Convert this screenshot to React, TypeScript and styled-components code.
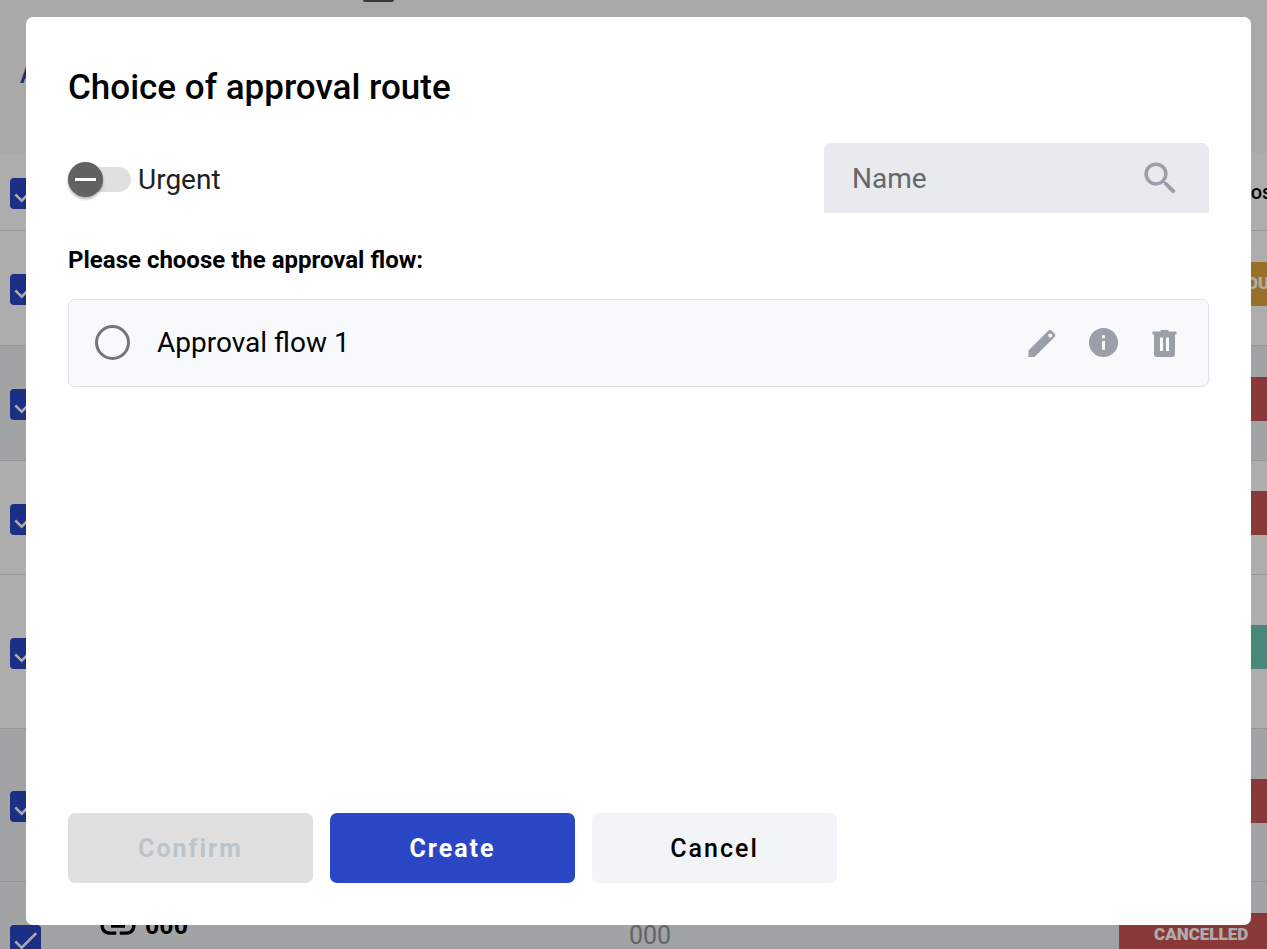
import React, { useState } from 'react';
import styled, { createGlobalStyle, css } from 'styled-components';
import { MdCheck, MdInfo, MdLink, MdSearch } from 'react-icons/md';

const color = {
  primary: '#2b46c5',
  icon: '#9aa0aa',
  green: '#6cc9b6',
  red: '#cb5551',
  amber: '#e0a53a',
};

const GlobalStyle = createGlobalStyle`
  *, *::before, *::after { box-sizing: border-box; }
  body {
    margin: 0;
    font-family: Roboto, "Liberation Sans", sans-serif;
    color: #000;
    background: #fff;
  }
  button, input { font: inherit; }
`;

/* ---------- page under the dialog ---------- */

const Page = styled.div`
  height: 100vh;
  overflow: hidden;
  background: #fff;
`;

const Toolbar = styled.header`
  display: flex;
  flex-direction: column;
  justify-content: space-between;
  height: 153px;
  padding: 0 20px 62px;
  background: #fafafa;
`;

const ToolbarMark = styled.span`
  width: 31px;
  height: 2px;
  margin-left: 343px;
  border-radius: 0 0 4px 4px;
  background: #555;
`;

const ToolbarLink = styled.a`
  font-size: 25px;
  line-height: 32px;
  font-weight: 500;
  color: ${color.primary};
  text-decoration: none;
`;

const Table = styled.table`
  width: calc(100% + 16px);
  border-collapse: separate;
  border-spacing: 0;
  table-layout: fixed;
`;

const Row = styled.tr<{ $height: number; $shaded?: boolean }>`
  height: ${(p) => p.$height}px;
  background: ${(p) => (p.$shaded ? '#eef0f3' : '#fff')};
`;

const cell = css`
  padding: 0;
  border-bottom: 1px solid #dcdddf;
  text-align: left;
  vertical-align: middle;
  white-space: nowrap;
`;

const HeadCell = styled.th<{ $width?: string }>`
  ${cell}
  width: ${(p) => p.$width ?? 'auto'};
  font-size: 20px;
  font-weight: 500;
`;

const StatusHead = styled(HeadCell)`
  padding-left: 119px;
`;

const Cell = styled.td`
  ${cell}
  font-size: 25px;
  color: #8f949b;
  padding-bottom: 8px;
`;

const CheckCell = styled(Cell)`
  width: 97px;
  padding: 3px 0 0 10px;
`;

const NameLine = styled.div`
  display: flex;
  align-items: center;
  gap: 6px;
  padding-bottom: 18px;
  line-height: 28px;
  font-weight: 700;
  color: #000;
`;

const CheckWrap = styled.label`
  display: grid;
  width: 31px;
  height: 31px;
  border-radius: 4px;
  background: ${color.primary};
  color: #fff;
  place-items: center;

  > * { grid-area: 1 / 1; }
  input { width: 100%; height: 100%; margin: 0; opacity: 0; }
`;

const StatusCell = styled(Cell)`
  padding-bottom: 9px;
`;

const Badge = styled.div<{ $tone: string }>`
  height: 44px;
  padding-left: 35px;
  background: ${(p) => p.$tone};
  color: #fff;
  font-size: 17px;
  line-height: 42px;
  font-weight: 900;
`;

/* ---------- dialog ---------- */

const Backdrop = styled.div`
  position: fixed;
  inset: 0;
  display: flex;
  padding: 17px 16px 24px 26px;
  background: rgba(0, 0, 0, 0.32);
`;

const Dialog = styled.section`
  display: flex;
  flex: 1;
  flex-direction: column;
  padding: 42px;
  border-radius: 7px;
  background: #fff;
`;

const Title = styled.h2`
  margin: 0 0 26px;
  font-size: 35px;
  line-height: 58px;
  font-weight: 500;
`;

const FilterBar = styled.div`
  display: flex;
  align-items: center;
  justify-content: space-between;
`;

const SwitchLabel = styled.label`
  display: flex;
  align-items: center;
  gap: 7px;
  padding-top: 3px;
  font-size: 28px;
  line-height: 36px;
  color: #212121;
`;

const SwitchInput = styled.input`
  appearance: none;
  display: flex;
  align-items: center;
  width: 63px;
  height: 25px;
  margin: 0;
  border-radius: 13px;
  background: #e0e0e0;

  &::before {
    content: '';
    flex: none;
    width: 35px;
    height: 35px;
    border-radius: 50%;
    background: linear-gradient(#fff, #fff) center / 21px 3px no-repeat #616161;
    box-shadow: 0 2px 3px rgba(0, 0, 0, 0.3);
  }
  &:checked { justify-content: flex-end; }
  &:checked::before { background-color: ${color.primary}; }
`;

const SearchField = styled.label`
  display: flex;
  align-items: center;
  width: 385px;
  height: 70px;
  padding: 0 27px 0 28px;
  border-radius: 7px 7px 0 0;
  background: #e9eaee;
  color: ${color.icon};
`;

const SearchInput = styled.input`
  flex: 1;
  min-width: 0;
  padding: 0;
  border: 0;
  outline: 0;
  background: none;
  font-size: 28px;
  color: #000;

  &::placeholder { color: #666; opacity: 1; }
`;

const Prompt = styled.h3`
  margin: 28px 0 20px;
  font-size: 24px;
  line-height: 38px;
  font-weight: 700;
`;

const FlowCard = styled.div`
  display: flex;
  align-items: center;
  justify-content: space-between;
  height: 88px;
  padding: 0 26px 1px;
  border: 1px solid #dee1e6;
  border-radius: 7px;
  background: #f8f9fb;
`;

const FlowLabel = styled.label`
  display: flex;
  align-items: center;
  gap: 27px;
  font-size: 28px;
  line-height: 36px;
`;

const Radio = styled.input`
  appearance: none;
  width: 35px;
  height: 35px;
  margin: 0;
  border: 3px solid #757575;
  border-radius: 50%;

  &:checked {
    border-color: ${color.primary};
    background: radial-gradient(${color.primary} 0 9px, transparent 10px);
  }
`;

const IconRow = styled.div`
  display: flex;
  gap: 26px;
`;

const IconButton = styled.button`
  display: flex;
  padding: 0;
  border: 0;
  background: none;
  color: ${color.icon};
  cursor: pointer;
`;

const Actions = styled.div`
  display: flex;
  gap: 17px;
  margin-top: auto;
`;

const tones = {
  primary: css`
    background: ${color.primary};
    color: #fff;
    font-weight: 700;
  `,
  plain: css`
    background: #f3f4f7;
    color: #000;
    font-weight: 500;
  `,
};

const ActionButton = styled.button<{ $tone: keyof typeof tones }>`
  width: 245px;
  height: 70px;
  padding: 0;
  border: 0;
  border-radius: 7px;
  font-size: 25px;
  letter-spacing: 2px;
  ${(p) => tones[p.$tone]}

  &:disabled {
    background: #e0e0e0;
    color: #bcc4cb;
  }
`;

const PencilIcon = () => (
  <svg width="35" height="35" viewBox="0 0 35 35" fill="currentColor" aria-hidden="true">
    <path
      fillRule="evenodd"
      d="M3.500 32v-6.500L23 6a2.800 2.800 0 0 1 4 0l2.300 2.300a2.800 2.800 0 0 1 0 4L9.500 32ZM25.300 8.400a2 2 0 1 0 0.010 0Z"
    />
  </svg>
);

const TrashIcon = () => (
  <svg width="35" height="35" viewBox="0 0 35 35" fill="currentColor" aria-hidden="true">
    <path
      fillRule="evenodd"
      d="M13.500 5h8v1.500H29.500V9.500h-1.500V29a3 3 0 0 1-3 3H10a3 3 0 0 1-3-3V9.500H5.500v-3h8ZM13 12.500v13.500h3V12.500ZM19 12.500v13.500h3V12.500Z"
    />
  </svg>
);

const Check = ({ label }: { label: string }) => (
  <CheckWrap>
    <input type="checkbox" defaultChecked aria-label={label} />
    <MdCheck size={31} aria-hidden="true" />
  </CheckWrap>
);

interface RowData {
  height: number;
  shaded: boolean;
  tone: string;
  status: string;
  name?: string;
  number?: string;
}

const rows: RowData[] = [
  { height: 115, shaded: false, tone: color.amber, status: 'WAIT FOR YOU' },
  { height: 115, shaded: true, tone: color.red, status: 'CANCELLED' },
  { height: 114, shaded: false, tone: color.red, status: 'CANCELLED' },
  { height: 154, shaded: false, tone: color.green, status: 'APPROVED' },
  { height: 153, shaded: true, tone: color.red, status: 'CANCELLED' },
  { height: 115, shaded: true, tone: color.red, status: 'CANCELLED', name: '000', number: '000' },
];

export default function App() {
  const [urgent, setUrgent] = useState(false);
  const [name, setName] = useState('');
  const [flow, setFlow] = useState('');

  return (
    <>
      <GlobalStyle />
      <Page>
        <Toolbar>
          <ToolbarMark />
          <ToolbarLink href="#all">All</ToolbarLink>
        </Toolbar>
        <Table>
          <thead>
            <Row $height={78}>
              <CheckCell as="th">
                <Check label="Select all" />
              </CheckCell>
              <HeadCell $width="532px" aria-label="Name" />
              <HeadCell aria-label="Number" />
              <StatusHead $width="164px">Position</StatusHead>
            </Row>
          </thead>
          <tbody>
            {rows.map((row, i) => (
              <Row key={i} $height={row.height} $shaded={row.shaded}>
                <CheckCell>
                  <Check label={`Select row ${i + 1}`} />
                </CheckCell>
                <Cell>
                  {row.name && (
                    <NameLine>
                      <MdLink size={42} aria-hidden="true" />
                      {row.name}
                    </NameLine>
                  )}
                </Cell>
                <Cell>{row.number}</Cell>
                <StatusCell>
                  <Badge $tone={row.tone}>{row.status}</Badge>
                </StatusCell>
              </Row>
            ))}
          </tbody>
        </Table>
      </Page>

      <Backdrop>
        <Dialog role="dialog" aria-modal="true" aria-labelledby="dialog-title">
          <Title id="dialog-title">Choice of approval route</Title>
          <FilterBar>
            <SwitchLabel>
              <SwitchInput
                type="checkbox"
                role="switch"
                checked={urgent}
                onChange={(e) => setUrgent(e.target.checked)}
              />
              Urgent
            </SwitchLabel>
            <SearchField>
              <SearchInput
                type="text"
                placeholder="Name"
                aria-label="Name"
                value={name}
                onChange={(e) => setName(e.target.value)}
              />
              <MdSearch size={43} aria-hidden="true" />
            </SearchField>
          </FilterBar>
          <Prompt>Please choose the approval flow:</Prompt>
          <FlowCard>
            <FlowLabel>
              <Radio
                type="radio"
                name="flow"
                value="1"
                checked={flow === '1'}
                onChange={(e) => setFlow(e.target.value)}
              />
              Approval flow 1
            </FlowLabel>
            <IconRow>
              <IconButton type="button" aria-label="Edit">
                <PencilIcon />
              </IconButton>
              <IconButton type="button" aria-label="Details">
                <MdInfo size={35} />
              </IconButton>
              <IconButton type="button" aria-label="Delete">
                <TrashIcon />
              </IconButton>
            </IconRow>
          </FlowCard>
          <Actions>
            <ActionButton type="button" $tone="primary" disabled={!flow}>
              Confirm
            </ActionButton>
            <ActionButton type="button" $tone="primary">
              Create
            </ActionButton>
            <ActionButton type="button" $tone="plain">
              Cancel
            </ActionButton>
          </Actions>
        </Dialog>
      </Backdrop>
    </>
  );
}
